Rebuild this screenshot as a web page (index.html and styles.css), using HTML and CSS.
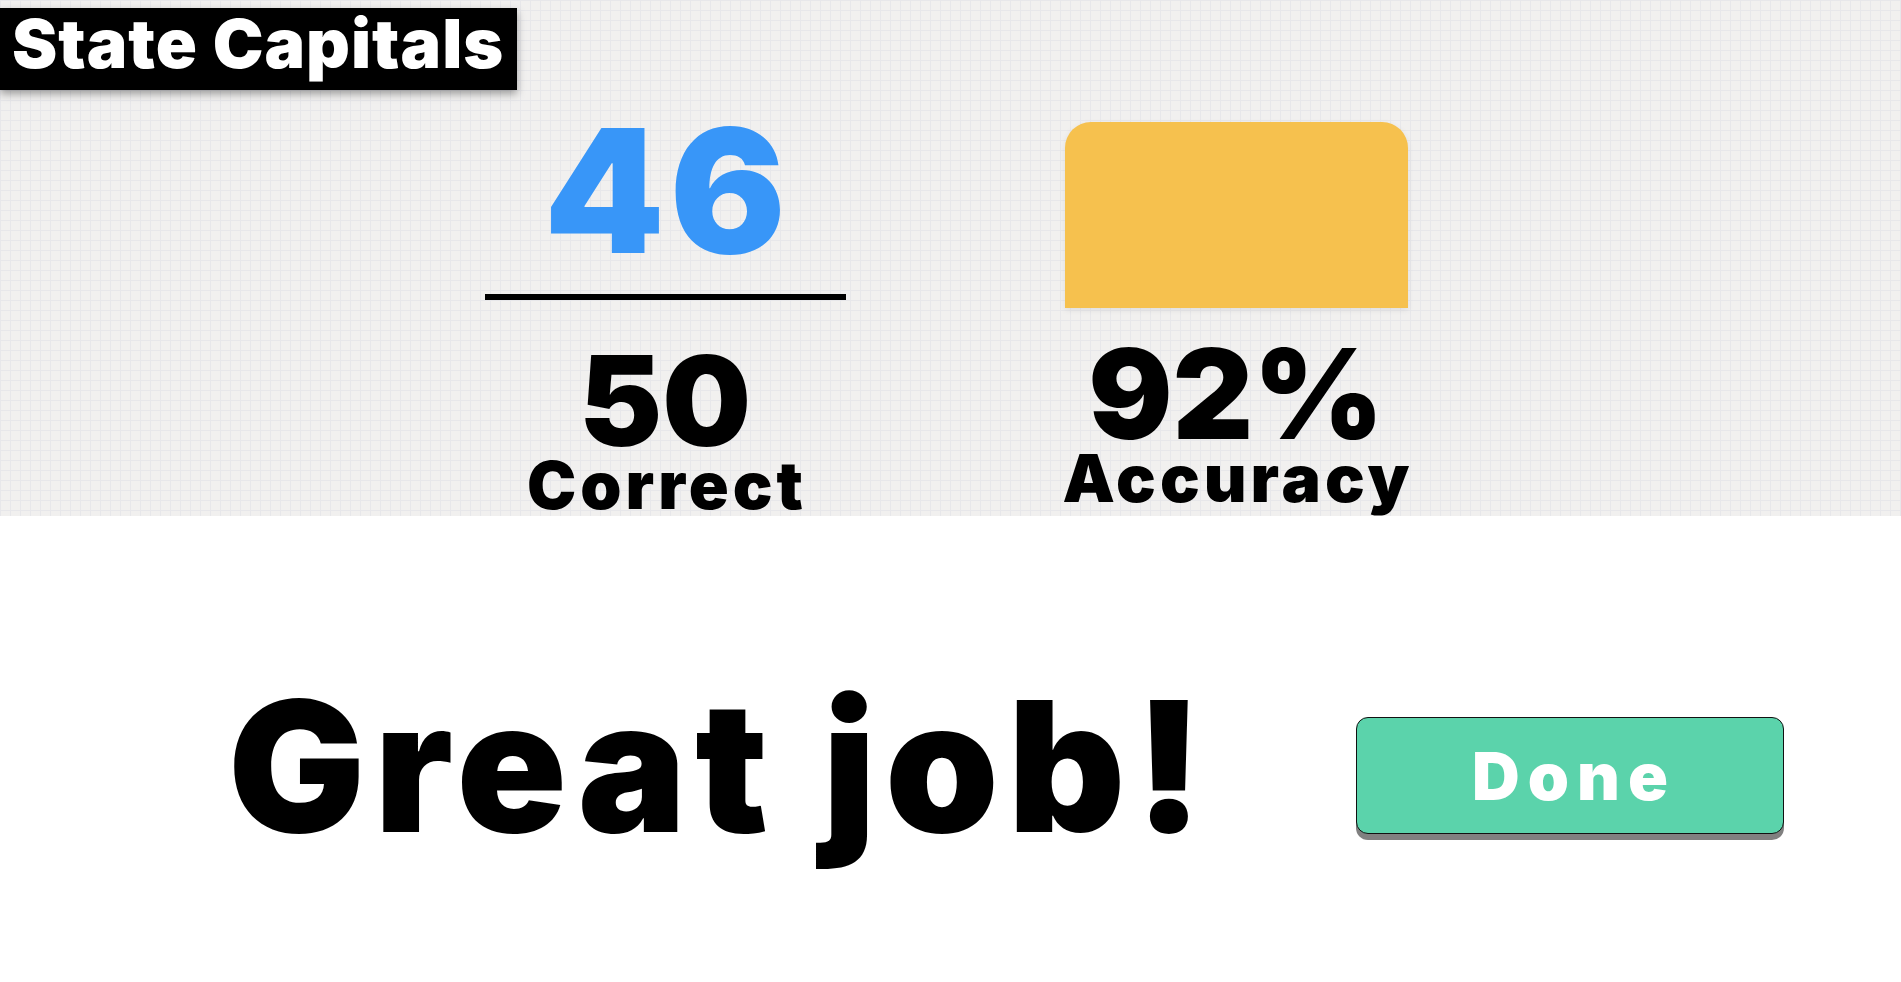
FILE: index.html
```html
<!DOCTYPE html>
<html lang="en">
<head>
<meta charset="utf-8">
<title>State Capitals – Results</title>
<link rel="stylesheet" href="styles.css">
</head>
<body>
  <section class="stats-area">
    <header class="title-bar">
      <h1 class="title">State Capitals</h1>
    </header>
    <div class="stats-row">
      <div class="stat stat-score">
        <div class="score">46</div>
        <div class="divider"></div>
        <div class="big-num">50</div>
        <div class="label">Correct</div>
      </div>
      <div class="stat stat-accuracy">
        <div class="accuracy-card"></div>
        <div class="big-num">92%</div>
        <div class="label">Accuracy</div>
      </div>
    </div>
  </section>
  <section class="finish">
    <div class="cheer">Great job!</div>
    <button class="done-btn" type="button">Done</button>
  </section>
</body>
</html>
```
FILE: styles.css
```css
html, body {
  margin: 0;
  padding: 0;
  background: #ffffff;
}

body {
  font-family: "Inter", "Lato", "DejaVu Sans", sans-serif;
  font-weight: 900;
  color: #000000;
  width: 1901px;
  height: 982px;
  overflow: hidden;
}

.stats-area {
  height: 516px;
  background-color: #f1f0ef;
  background-image:
    linear-gradient(to right, #e7e7ea 1px, transparent 1px),
    linear-gradient(to bottom, #e7e7ea 1px, transparent 1px);
  background-size: 10px 10px;
  padding-top: 8px;
  box-sizing: border-box;
}

.title-bar {
  width: 517px;
  height: 82px;
  background: #000000;
  box-shadow: 0 4px 8px rgba(0, 0, 0, 0.35);
  box-sizing: border-box;
  padding-left: 12px;
}

.title {
  margin: 0;
  color: #ffffff;
  font-size: 68px;
  font-weight: 900;
  line-height: 70px;
  letter-spacing: 1px;
  white-space: nowrap;
}

.stats-row {
  display: flex;
  justify-content: center;
  align-items: flex-start;
  gap: 210px;
}

.stat {
  width: 361px;
  display: flex;
  flex-direction: column;
  align-items: center;
  text-align: center;
}

.stat-score {
  padding-top: 14px;
}

.stat-accuracy {
  padding-top: 32px;
}

.score {
  color: #3896f8;
  font-size: 172px;
  line-height: 172px;
  letter-spacing: 5px;
  padding-left: 5px;
  white-space: nowrap;
}

.divider {
  width: 361px;
  height: 6px;
  background: #000000;
  margin-top: 18px;
}

.stat-score .big-num {
  margin-top: 51px;
}

.big-num {
  font-size: 125px;
  line-height: 100px;
  white-space: nowrap;
}

.stat-accuracy .big-num {
  margin-top: 5px;
}

.label {
  font-size: 66px;
  line-height: 56px;
  letter-spacing: 4px;
  padding-left: 4px;
  margin-top: 6px;
  white-space: nowrap;
}

.accuracy-card {
  width: 343px;
  height: 186px;
  background: #f6c14e;
  border-radius: 26px 26px 0 0;
  box-shadow: 0 2px 6px rgba(0, 0, 0, 0.08);
  margin-bottom: 31px;
}

.finish {
  display: flex;
  align-items: flex-start;
  padding-top: 159px;
  padding-left: 219px;
}

.cheer {
  width: 953px;
  text-align: center;
  font-size: 182px;
  line-height: 182px;
  letter-spacing: 9px;
  padding-left: 9px;
  box-sizing: border-box;
  white-space: nowrap;
}

.done-btn {
  margin-top: 42px;
  margin-left: 184px;
  width: 428px;
  height: 117px;
  background: #5bd3ab;
  border: 1.5px solid #111111;
  border-radius: 12px;
  box-shadow: 0 6px 0 #808080;
  color: #ffffff;
  font-family: inherit;
  font-weight: 900;
  font-size: 66px;
  line-height: 1;
  letter-spacing: 8px;
  padding: 0 0 0 8px;
  display: flex;
  align-items: center;
  justify-content: center;
  cursor: pointer;
}
```
